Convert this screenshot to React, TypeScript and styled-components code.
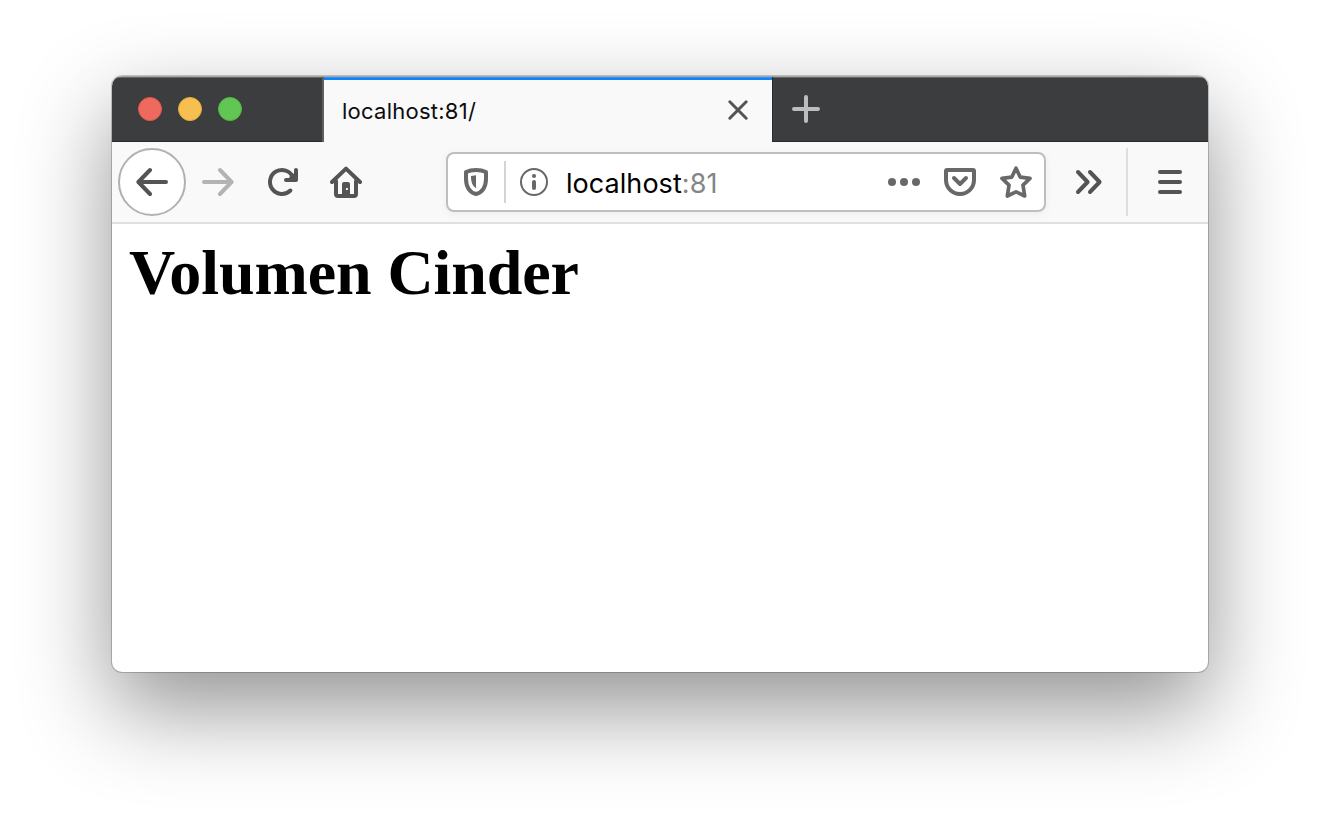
import React from "react";
import styled, { createGlobalStyle } from "styled-components";

const GlobalStyle = createGlobalStyle`
  * { box-sizing: border-box; }
  body { margin: 0; background: #fff; overflow: hidden; }
`;

const Desktop = styled.div`
  width: 1320px;
  height: 820px;
  padding: 76px 112px 0;
  background: #fff;
  font-family: Inter, "Liberation Sans", sans-serif;
`;

const BrowserWindow = styled.div`
  display: flex;
  flex-direction: column;
  height: 596px;
  border-radius: 10px;
  overflow: hidden;
  background: #fff;
  box-shadow: 0 0 0 1px rgba(0, 0, 0, 0.2), 0 36px 90px rgba(0, 0, 0, 0.43);
`;

const TabBar = styled.div`
  display: flex;
  height: 66px;
  flex: none;
  border-top: 1px solid #a4a5a6;
  background: linear-gradient(#66676a 0 1px, #3c3d3f 1px 64px, #2c272b 64px);
`;

const Lights = styled.div`
  display: flex;
  align-items: center;
  gap: 16px;
  width: 212px;
  padding: 0 0 1px 26px;
  border-right: 2px solid #5e5f61;
`;

const Light = styled.span<{ $fill: string; $rim: string }>`
  width: 24px;
  height: 24px;
  border-radius: 50%;
  background: ${(p) => p.$fill};
  border: 1px solid ${(p) => p.$rim};
`;

const Tab = styled.div`
  display: flex;
  align-items: center;
  justify-content: space-between;
  width: 448px;
  padding: 1px 18px 0 18px;
  background: linear-gradient(#3990e8 0 1px, #0a84ff 1px 3px, #f9f9fa 3px);
`;

const TabTitle = styled.span`
  padding-top: 2px;
  font-size: 22px;
  line-height: 28px;
  color: #0c0c0d;
  letter-spacing: 0.25px;
  white-space: nowrap;
`;

const NewTab = styled.div`
  display: flex;
  align-items: center;
  width: 100px;
  padding: 0 0 1px 18px;
  background: linear-gradient(#2b2b2d, #2b2b2d) 0 0 / 1px 100% no-repeat;
`;

const Toolbar = styled.div`
  display: flex;
  align-items: center;
  height: 82px;
  flex: none;
  padding: 0 24px 0 6px;
  background: #f9f9fa;
  border-bottom: 2px solid #e0e0e1;
`;

const BackButton = styled.div`
  display: flex;
  align-items: center;
  justify-content: center;
  width: 68px;
  height: 68px;
  border: 2px solid #b1b1b1;
  border-radius: 50%;
  background: #fff;
`;

const NavIcons = styled.div`
  display: flex;
  gap: 32px;
  margin-left: 16px;
`;

const UrlBar = styled.div`
  display: flex;
  align-items: center;
  width: 600px;
  height: 60px;
  margin-left: 84px;
  padding: 0 12px;
  border: 2px solid #bebebe;
  border-radius: 8px;
  background: #fff;
  box-shadow: 0 2px 8px rgba(0, 0, 0, 0.05);
`;

const UrlDivider = styled.span`
  width: 2px;
  height: 42px;
  margin: 0 12px;
  background: #d4d4d4;
`;

const Address = styled.span`
  flex: 1;
  margin-left: 16px;
  padding-top: 3px;
  font-size: 27px;
  line-height: 34px;
  letter-spacing: 0.05px;
  color: #000;
  white-space: nowrap;
`;

const Port = styled.span`
  color: #858585;
`;

const PageActions = styled.div`
  display: flex;
  gap: 24px;
`;

const MenuArea = styled.div`
  display: flex;
  align-items: center;
  flex: 1;
  padding-left: 28px;
`;

const MenuDivider = styled.span`
  width: 2px;
  height: 68px;
  margin: 0 28px 0 20px;
  background: #dedede;
`;

const Glyph = styled.svg<{ $color?: string }>`
  display: block;
  flex: none;
  fill: none;
  stroke: ${(p) => p.$color ?? "#545455"};
  stroke-width: 4;
  stroke-linecap: round;
  stroke-linejoin: round;
  & .solid {
    fill: ${(p) => p.$color ?? "#545455"};
    stroke: none;
  }
`;

const Content = styled.main`
  flex: 1;
  padding: 13px 17px;
`;

const Heading = styled.h1`
  margin: 0;
  font-family: "Liberation Serif", serif;
  font-size: 64px;
  line-height: 72px;
  font-weight: 700;
  letter-spacing: -0.08px;
  color: #000;
`;

const icon = { width: 32, height: 32, viewBox: "0 0 32 32" };
const soft = "#686868";

export default function App() {
  return (
    <>
      <GlobalStyle />
      <Desktop>
        <BrowserWindow>
          <TabBar>
            <Lights>
              <Light $fill="#ee6a5f" $rim="#e2574b" />
              <Light $fill="#f6bf50" $rim="#e2ab3f" />
              <Light $fill="#62c655" $rim="#54b446" />
            </Lights>
            <Tab>
              <TabTitle>localhost:81/</TabTitle>
              <Glyph {...icon}>
                <path d="M7.800 7.800l16.400 16.400M24.200 7.800L7.800 24.200" strokeWidth="3" />
              </Glyph>
            </Tab>
            <NewTab>
              <Glyph {...icon} $color="#bdbdbe">
                <path d="M4 16h24M16 4v24" />
              </Glyph>
            </NewTab>
          </TabBar>
          <Toolbar>
            <BackButton>
              <Glyph {...icon}>
                <path d="M30 16H2.600M14 4L2.400 16L14 28" />
              </Glyph>
            </BackButton>
            <NavIcons>
              <Glyph {...icon} $color="#b3b3b4">
                <path d="M2 16h27.400M18 4l11.600 12L18 28" />
              </Glyph>
              <Glyph {...icon}>
                <path d="M24.400 24.500A12 12 0 1 1 27 11.200" />
                <path d="M20 14H30V4" />
                <path className="solid" d="M24 10l6-4v8h-8z" />
              </Glyph>
              <Glyph {...icon}>
                <path d="M2 16L16 2.600L30 16" />
                <path d="M6 15v13q0 2 2 2h16q2 0 2-2V15" />
                <path className="solid" fillRule="evenodd" d="M12 31V18q0-2 2-2h4q2 0 2 2v13zM16 22v2h1.800V22z" />
              </Glyph>
            </NavIcons>
            <UrlBar>
              <Glyph {...icon} $color={soft}>
                <path d="M16 4c4 0 7.500.8 10 2v7c0 8-4 14-10 15C10 27 6 21 6 13V6c2.500-1.200 6-2 10-2z" />
                <path className="solid" d="M16 9.200v13c-3.500-2-5-6-5-12.200z" />
              </Glyph>
              <UrlDivider />
              <Glyph {...icon} $color={soft}>
                <circle cx="16" cy="16" r="13" strokeWidth="2" />
                <circle className="solid" cx="16" cy="10" r="2.100" />
                <path d="M16 16v6" />
              </Glyph>
              <Address>
                localhost<Port>:81</Port>
              </Address>
              <PageActions>
                <Glyph {...icon} $color={soft}>
                  <circle className="solid" cx="4" cy="16" r="4" />
                  <circle className="solid" cx="16" cy="16" r="4" />
                  <circle className="solid" cx="28" cy="16" r="4" />
                </Glyph>
                <Glyph {...icon} $color={soft}>
                  <path d="M3 4h26q1 0 1 1v9a14 14 0 0 1-28 0V5q0-1 1-1z" />
                  <path d="M10 12l6 6 6-6" />
                </Glyph>
                <Glyph {...icon} $color={soft}>
                  <path
                    strokeWidth="3.7"
                    d="M16 2.200l4.300 9 9.700 1.200-7 6.800 1.700 10.800L16 25.800l-8.700 4.200L9 19.200 2 12.400l9.700-1.200z"
                  />
                </Glyph>
              </PageActions>
            </UrlBar>
            <MenuArea>
              <Glyph {...icon}>
                <path d="M4 6l9.600 10L4 26M16 6l9.600 10L16 26" />
              </Glyph>
              <MenuDivider />
              <Glyph width="28" height="32" viewBox="0 0 28 32">
                <path d="M4 6h20M4 16h20M4 26h20" />
              </Glyph>
            </MenuArea>
          </Toolbar>
          <Content>
            <Heading>Volumen Cinder</Heading>
          </Content>
        </BrowserWindow>
      </Desktop>
    </>
  );
}
